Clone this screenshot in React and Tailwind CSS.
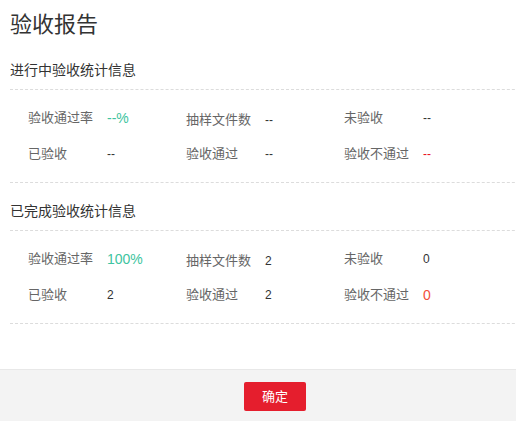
const ongoing = [
  [
    { label: '验收通过率', value: '--%', tone: 'green' },
    { label: '抽样文件数', value: '--', shift: true },
    { label: '未验收', value: '--' },
  ],
  [
    { label: '已验收', value: '--' },
    { label: '验收通过', value: '--' },
    { label: '验收不通过', value: '--', tone: 'red' },
  ],
];

const finished = [
  [
    { label: '验收通过率', value: '100%', tone: 'green' },
    { label: '抽样文件数', value: '2', shift: true },
    { label: '未验收', value: '0' },
  ],
  [
    { label: '已验收', value: '2' },
    { label: '验收通过', value: '2' },
    { label: '验收不通过', value: '0', tone: 'orange' },
  ],
];

function StatCell({ label, value, tone, shift }) {
  const valueClass =
    tone === 'green'
      ? 'text-[14px] text-[#3ec4a0]'
      : tone === 'red'
      ? 'text-[12px] text-[#e8101c]'
      : tone === 'orange'
      ? 'text-[14px] text-[#f2503a]'
      : 'text-[12px] text-[#333]';
  return (
    <div className={`flex items-center w-[158px] ${shift ? 'pt-[3px]' : ''}`}>
      <span className="w-[79px] text-[13px] text-[#666]">{label}</span>
      <span className={`font-['Liberation_Sans',sans-serif] ${valueClass}`}>{value}</span>
    </div>
  );
}

function Section({ title, rows, top }) {
  return (
    <div className={top}>
      <div className="h-[38px] flex items-center text-[14px] text-[#333]">{title}</div>
      <div className="border-t border-b border-dashed border-[#dcdcdc] pt-[10px] pb-[10px]">
        {rows.map((row, i) => (
          <div key={i} className="h-[36px] flex items-center pl-[18px]">
            {row.map((c) => (
              <StatCell key={c.label} {...c} />
            ))}
          </div>
        ))}
      </div>
    </div>
  );
}

export default function App() {
  return (
    <div
      className="w-[516px] h-[421px] overflow-hidden bg-white"
      style={{ fontFamily: 'Roboto, "Noto Sans CJK SC", sans-serif' }}
    >
      <div className="w-[550px] h-[421px] flex flex-col">
        <div className="pl-[10px]">
          <div className="h-[43px] pt-[5px] flex items-center text-[22px] text-[#333]">验收报告</div>
          <Section title="进行中验收统计信息" rows={ongoing} top="pt-[8px]" />
          <Section title="已完成验收统计信息" rows={finished} top="pt-[9px]" />
        </div>
        <div className="mt-auto h-[52px] border-t border-[#e8e8e8] bg-[#f3f3f3] flex justify-center pt-[12px]">
          <button className="w-[62px] h-[29px] rounded-[2px] bg-[#e51e2d] text-white text-[13px]">
            确定
          </button>
        </div>
      </div>
    </div>
  );
}
